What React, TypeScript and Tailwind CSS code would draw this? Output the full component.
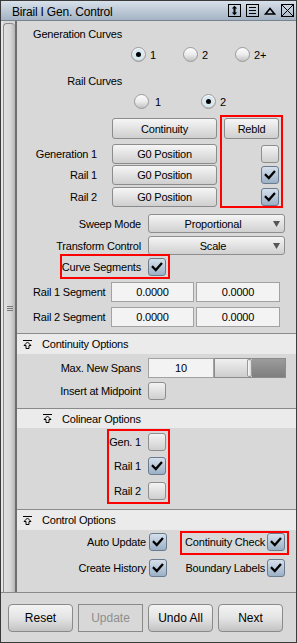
import React from "react";

function Check() {
  return (
    <svg width="16" height="16" viewBox="0 0 16 16" className="block">
      <path d="M3.8 8 L6.8 11 L12.2 4.8" fill="none" stroke="#000" strokeWidth="2.3" strokeLinecap="square" />
    </svg>
  );
}

function Checkbox({ checked }: { checked?: boolean }) {
  if (checked)
    return (
      <div className="w-[18px] h-[18px] shrink-0 rounded-[3px] border border-[#6b7b8e] bg-linear-to-b from-[#d6e0ec] to-[#9bb0c6] flex items-center justify-center">
        <Check />
      </div>
    );
  return <div className="w-[18px] h-[18px] shrink-0 rounded-[3px] border border-[#8e8e8e] bg-linear-to-b from-[#f3f3f3] to-[#cfcfcf]" />;
}

function Radio({ on }: { on?: boolean }) {
  return (
    <div className="w-[15px] h-[15px] shrink-0 rounded-full border border-[#9a9a9a] bg-linear-to-b from-[#fdfdfd] via-[#ececec] via-50% to-[#c2c2c2] flex items-center justify-center">
      {on && (
        <div className="w-[11px] h-[11px] rounded-full bg-[#d6e8f0] flex items-center justify-center">
          <div className="w-[5px] h-[5px] rounded-full bg-black" />
        </div>
      )}
    </div>
  );
}

function Btn({ children, w, h = "h-[20px]" }: { children: React.ReactNode; w: string; h?: string }) {
  return (
    <div className={`${w} ${h} shrink-0 rounded-[3px] border border-[#8c8c8c] bg-linear-to-b from-[#f6f6f6] to-[#cfcfcf] flex items-center justify-center`}>
      {children}
    </div>
  );
}

function Field({ children, w }: { children: React.ReactNode; w: string }) {
  return (
    <div className={`${w} h-[20px] shrink-0 border border-[#a2a2a2] bg-[#f3f3f3] flex items-center justify-center`}>
      {children}
    </div>
  );
}

function Dropdown({ value }: { value: string }) {
  return (
    <div className="w-[137px] h-[19px] shrink-0 rounded-[3px] border border-[#8e8e8e] bg-linear-to-b from-[#f5f5f5] to-[#d0d0d0] flex items-center">
      <span className="flex-1 text-center pl-[4px]">{value}</span>
      <svg width="7" height="6" viewBox="0 0 7 6" className="mr-[4px]">
        <path d="M0 0 H7 L3.5 6 Z" fill="#555" />
      </svg>
    </div>
  );
}

function CollapseIcon() {
  return (
    <svg width="9" height="9" viewBox="0 0 9 9" className="block">
      <path d="M0 0.5 H9" stroke="#000" strokeWidth="1" />
      <path d="M4.5 2 L8 5.5 H6 V8.5 H3 V5.5 H1 Z" fill="none" stroke="#000" strokeWidth="1" />
    </svg>
  );
}

function Header({ title, indent, h = "h-[20px]" }: { title: string; indent?: boolean; h?: string }) {
  return (
    <div className={`${h} shrink-0 border-t border-[#8a8a8a] bg-[#ebebeb] flex items-center`}>
      <div className={indent ? "pl-[26px]" : "pl-[6px]"}>
        <CollapseIcon />
      </div>
      <span className="ml-[10px]">{title}</span>
    </div>
  );
}

function Row({ label, lw, children, h = "h-[20px]", mt }: { label: string; lw: string; children: React.ReactNode; h?: string; mt: string }) {
  return (
    <div className={`${h} ${mt} shrink-0 flex items-center`}>
      <div className={`${lw} text-right shrink-0`}>{label}</div>
      {children}
    </div>
  );
}

function RedBox({ cls }: { cls: string }) {
  return <div className={`absolute border-2 border-[#ff0000] pointer-events-none ${cls}`} />;
}

export default function App() {
  return (
    <div className="w-[297px] h-[643px] border border-[#3a3a3a] bg-[#d8d8d8] flex flex-col font-['Liberation_Sans',Arial,sans-serif] text-[11px] leading-[14px] tracking-[-0.2px] text-black overflow-hidden">
      {/* Title bar */}
      <div className="h-[20px] shrink-0 border-b border-[#76848f] bg-linear-to-b from-[#d8e1ea] to-[#a4b3c4] flex items-center">
        <span className="pl-[11px] pt-[2px] text-[12px]">Birail I Gen. Control</span>
        <div className="ml-auto flex items-center gap-[5px] pr-[2px]">
          <svg width="13" height="13" viewBox="0 0 13 13" className="block">
            <rect x="0.5" y="0.5" width="12" height="12" fill="none" stroke="#000" />
            <path d="M6.5 3.5 V9.5" stroke="#000" strokeWidth="2" />
            <path d="M3.8 4.5 L6.5 1.8 L9.2 4.5 Z M3.8 8.5 L6.5 11.2 L9.2 8.5 Z" fill="#000" />
          </svg>
          <svg width="13" height="13" viewBox="0 0 13 13" className="block">
            <rect x="0.5" y="0.5" width="12" height="12" fill="none" stroke="#000" />
            <path d="M3 3.5 H10 M3 6.5 H10 M3 9.5 H10" stroke="#000" strokeWidth="1" />
          </svg>
          <svg width="12" height="13" viewBox="0 0 12 13" className="block">
            <path d="M1.5 10 L6 4.5 L10.5 10 Z" fill="none" stroke="#000" strokeWidth="1.6" strokeLinejoin="miter" />
          </svg>
          <svg width="13" height="13" viewBox="0 0 13 13" className="block">
            <rect x="0.5" y="0.5" width="12" height="12" fill="none" stroke="#000" />
            <path d="M1 1 L12 12 M12 1 L1 12" stroke="#000" strokeWidth="1" />
          </svg>
        </div>
      </div>

      {/* Body */}
      <div className="h-[571px] shrink-0 flex">
        {/* Left strip */}
        <div className="w-[16px] shrink-0 flex">
          <div className="w-[2px] bg-[#e6e6e6]" />
          <div className="w-[12px] mt-[2px] rounded-t-[4px] border-l border-t border-[#8a8a8a] bg-linear-to-r from-[#e0e0e0] via-[#d6d6d6] via-60% to-[#b6b6b6] flex items-center justify-center">
            <div className="flex flex-col gap-[1px]">
              <div className="w-[6px] h-[1px] bg-[#7a7a7a]" />
              <div className="w-[6px] h-[1px] bg-[#7a7a7a]" />
              <div className="w-[6px] h-[1px] bg-[#7a7a7a]" />
            </div>
          </div>
          <div className="w-[2px] bg-[#6e6e6e]" />
        </div>

        {/* Panel */}
        <div className="relative flex-1 flex flex-col">
          {/* Section 1 */}
          <div className="h-[312px] shrink-0 flex flex-col">
            <div className="mt-[6px] h-[14px] w-[105px] text-right">Generation Curves</div>
            <div className="mt-[6px] h-[15px] pl-[114px] flex">
              <div className="w-[52px] flex items-center gap-[4px]"><Radio on /><span>1</span></div>
              <div className="w-[52px] flex items-center gap-[4px]"><Radio /><span>2</span></div>
              <div className="w-[52px] flex items-center gap-[4px]"><Radio /><span>2+</span></div>
            </div>
            <div className="mt-[12px] h-[14px] w-[105px] text-right">Rail Curves</div>
            <div className="mt-[6px] h-[15px] pl-[117px] flex">
              <div className="w-[67px] flex items-center gap-[6px]"><Radio /><span>1</span></div>
              <div className="w-[67px] flex items-center gap-[4px]"><Radio on /><span>2</span></div>
            </div>
            <div className="mt-[9px] h-[21px] pl-[95px] flex gap-[7px]">
              <Btn w="w-[105px]" h="h-[21px]">Continuity</Btn>
              <Btn w="w-[55px]" h="h-[21px]">Rebld</Btn>
            </div>
            <Row label="Generation 1" lw="w-[80px]" mt="mt-[5px]">
              <div className="ml-[15px]"><Btn w="w-[105px]">G0 Position</Btn></div>
              <div className="ml-[44px]"><Checkbox /></div>
            </Row>
            <Row label="Rail 1" lw="w-[80px]" mt="mt-[1px]">
              <div className="ml-[15px]"><Btn w="w-[105px]">G0 Position</Btn></div>
              <div className="ml-[44px]"><Checkbox checked /></div>
            </Row>
            <Row label="Rail 2" lw="w-[80px]" mt="mt-[2px]">
              <div className="ml-[15px]"><Btn w="w-[105px]">G0 Position</Btn></div>
              <div className="ml-[44px]"><Checkbox checked /></div>
            </Row>
            <Row label="Sweep Mode" lw="w-[124px]" h="h-[19px]" mt="mt-[7px]">
              <div className="ml-[7px]"><Dropdown value="Proportional" /></div>
            </Row>
            <Row label="Transform Control" lw="w-[124px]" h="h-[19px]" mt="mt-[3px]">
              <div className="ml-[7px]"><Dropdown value="Scale" /></div>
            </Row>
            <Row label="Curve Segments" lw="w-[124px]" h="h-[19px]" mt="mt-[2px]">
              <div className="ml-[7px]"><Checkbox checked /></div>
            </Row>
            <div className="mt-[6px] h-[20px] pl-[16px] flex items-center">
              <div className="w-[78px]">Rail 1 Segment</div>
              <Field w="w-[83px]">0.0000</Field>
              <div className="ml-[2px]"><Field w="w-[84px]">0.0000</Field></div>
            </div>
            <div className="mt-[5px] h-[20px] pl-[16px] flex items-center">
              <div className="w-[78px]">Rail 2 Segment</div>
              <Field w="w-[83px]">0.0000</Field>
              <div className="ml-[2px]"><Field w="w-[84px]">0.0000</Field></div>
            </div>
          </div>

          {/* Continuity Options */}
          <Header title="Continuity Options" h="h-[21px]" />
          <div className="h-[54px] shrink-0 flex flex-col">
            <Row label="Max. New Spans" lw="w-[124px]" mt="mt-[4px]">
              <div className="ml-[7px] flex">
                <Field w="w-[66px]">10</Field>
                <div className="w-[72px] h-[20px] border border-[#8c8c8c] flex">
                  <div className="w-[32px] bg-linear-to-b from-[#f0f0f0] to-[#cdcdcd]" />
                  <div className="w-[5px] rounded-[2px] border border-[#9a9a9a] bg-linear-to-r from-[#fafafa] to-[#d8d8d8]" />
                  <div className="flex-1 bg-linear-to-b from-[#9c9c9c] to-[#7e7e7e]" />
                </div>
              </div>
            </Row>
            <Row label="Insert at Midpoint" lw="w-[124px]" h="h-[19px]" mt="mt-[3px]">
              <div className="ml-[7px]"><Checkbox /></div>
            </Row>
          </div>

          {/* Colinear Options */}
          <Header title="Colinear Options" indent />
          <div className="h-[81px] shrink-0 flex flex-col">
            <Row label="Gen. 1" lw="w-[124px]" h="h-[19px]" mt="mt-[4px]">
              <div className="ml-[7px]"><Checkbox /></div>
            </Row>
            <Row label="Rail 1" lw="w-[124px]" h="h-[19px]" mt="mt-[5px]">
              <div className="ml-[7px]"><Checkbox checked /></div>
            </Row>
            <Row label="Rail 2" lw="w-[124px]" h="h-[19px]" mt="mt-[6px]">
              <div className="ml-[7px]"><Checkbox /></div>
            </Row>
          </div>

          {/* Control Options */}
          <Header title="Control Options" h="h-[21px]" />
          <div className="flex-1 flex flex-col">
            <Row label="Auto Update" lw="w-[129px]" mt="mt-[2px]">
              <div className="ml-[3px]"><Checkbox checked /></div>
              <div className="w-[98px] text-right">Continuity Check</div>
              <div className="ml-[2px]"><Checkbox checked /></div>
            </Row>
            <Row label="Create History" lw="w-[129px]" mt="mt-[6px]">
              <div className="ml-[3px]"><Checkbox checked /></div>
              <div className="w-[98px] text-right">Boundary Labels</div>
              <div className="ml-[2px]"><Checkbox checked /></div>
            </Row>
          </div>

          {/* Annotation boxes */}
          <RedBox cls="left-[203px] top-[94px] w-[63px] h-[93px]" />
          <RedBox cls="left-[43px] top-[233px] w-[110px] h-[25px]" />
          <RedBox cls="left-[90px] top-[408px] w-[63px] h-[75px]" />
          <RedBox cls="left-[163px] top-[510px] w-[109px] h-[24px]" />
        </div>
      </div>

      {/* Bottom buttons */}
      <div className="h-[50px] shrink-0 border-t border-[#8a8a8a] pl-[7px] pt-[11px] flex gap-[5px] text-[12px] tracking-normal">
        <div className="w-[65px] h-[28px] rounded-[4px] border border-[#8a8a8a] bg-linear-to-b from-[#f3f3f3] via-[#e4e4e4] to-[#c3c3c3] flex items-center justify-center">Reset</div>
        <div className="w-[65px] h-[28px] border border-[#8a8a8a] bg-[#d8d8d8] text-[#8e8e8e] flex items-center justify-center">Update</div>
        <div className="w-[65px] h-[28px] rounded-[4px] border border-[#8a8a8a] bg-linear-to-b from-[#f3f3f3] via-[#e4e4e4] to-[#c3c3c3] flex items-center justify-center">Undo All</div>
        <div className="w-[65px] h-[28px] rounded-[4px] border border-[#8a8a8a] bg-linear-to-b from-[#f3f3f3] via-[#e4e4e4] to-[#c3c3c3] flex items-center justify-center">Next</div>
      </div>
    </div>
  );
}
